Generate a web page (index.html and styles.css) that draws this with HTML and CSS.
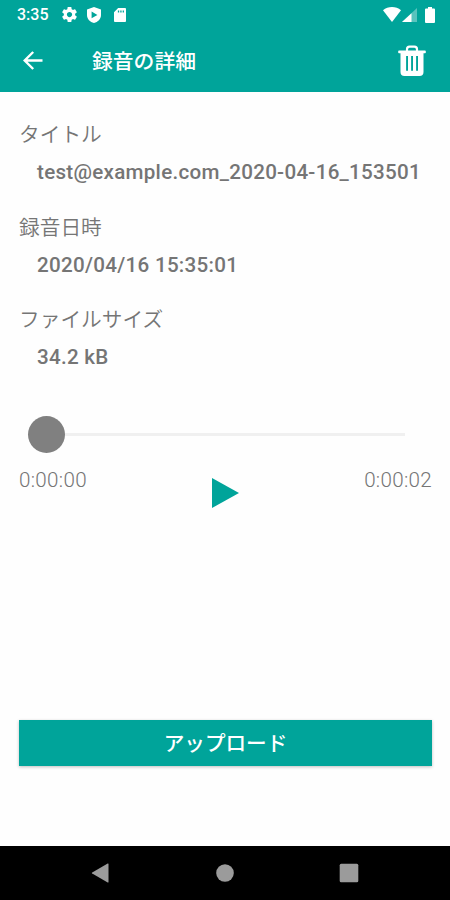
FILE: index.html
```html
<!DOCTYPE html>
<html lang="ja">
<head>
    <meta charset="UTF-8">
    <meta name="viewport" content="width=device-width, initial-scale=1.0">
    <title>録音の詳細</title>
    <link rel="stylesheet" href="styles.css">
</head>
<body>
    <div class="screen">
        <header class="header">
            <div class="status-bar">
                <span class="clock">3:35</span>
                <svg class="status-gear" viewBox="2 2 20 20">
                    <path fill="#fff" fill-rule="evenodd" d="M19.43 12.98c.04-.32.07-.64.07-.98s-.03-.66-.07-.98l2.11-1.65c.19-.15.24-.42.12-.64l-2-3.46c-.12-.22-.39-.3-.61-.22l-2.49 1c-.52-.4-1.08-.73-1.69-.98l-.38-2.65C14.46 2.18 14.25 2 14 2h-4c-.25 0-.46.18-.49.42l-.38 2.65c-.61.25-1.17.59-1.69.98l-2.49-1c-.23-.09-.49 0-.61.22l-2 3.46c-.13.22-.07.49.12.64l2.11 1.65c-.04.32-.07.65-.07.98s.03.66.07.98l-2.11 1.65c-.19.15-.24.42-.12.64l2 3.46c.12.22.39.3.61.22l2.49-1c.52.4 1.08.73 1.69.98l.38 2.65c.03.24.24.42.49.42h4c.25 0 .46-.18.49-.42l.38-2.65c.61-.25 1.17-.59 1.69-.98l2.49 1c.23.09.49 0 .61-.22l2-3.46c.12-.22.07-.49-.12-.64l-2.11-1.65zM12 15.5c-1.93 0-3.5-1.57-3.5-3.5s1.57-3.5 3.5-3.5 3.500 1.570 3.500 3.500-1.570 3.500-3.500 3.500z"/>
                </svg>
                <svg class="status-shield" viewBox="0 0 14 16">
                    <path fill="#fff" fill-rule="evenodd" d="M7 0l7 2.500v5.500c0 4-3 7-7 8-4-1-7-4-7-8V2.500zM4.600 4.600v6.600L10.400 7.900z"/>
                </svg>
                <svg class="status-card" viewBox="0 0 13 15">
                    <path fill="#fff" fill-rule="evenodd" d="M4.500 0H12q1 0 1 1v13q0 1-1 1H1q-1 0-1-1V4.500zM4.200 2.500v2.200h1.400V2.500zM6.800 2.500v2.200h1.400V2.500zM9.400 2.500v2.200h1.400V2.500z"/>
                </svg>
                <svg class="status-wifi" viewBox="0 0 18 15">
                    <path fill="#fff" d="M0 3.200C5 -1 13 -1 18 3.200L9 15z"/>
                </svg>
                <svg class="status-signal" viewBox="0 0 15 14">
                    <path fill="#fff" fill-opacity=".35" d="M15 0v14H0z"/>
                    <path fill="#fff" d="M9.500 5.200V14H0z"/>
                </svg>
                <svg class="status-battery" viewBox="0 0 10 16">
                    <path fill="#fff" d="M3 0h4v1.500h2q1 0 1 1V15q0 1-1 1H1q-1 0-1-1V2.500q0-1 1-1h2z"/>
                </svg>
            </div>
            <div class="title-bar">
                <svg class="back" viewBox="0 0 20 19">
                    <path fill="none" stroke="#fff" stroke-width="2.400" d="M19.500 9.500H2M10.200 1L1.700 9.500l8.500 8.500"/>
                </svg>
                <h1>録音の詳細</h1>
                <svg class="trash" viewBox="0 0 28 32">
                    <path fill="none" stroke="#fff" stroke-width="2.200" d="M9 6.500V4.200q0-2.600 2.600-2.600h4.800q2.600 0 2.600 2.600v2.300"/>
                    <path fill="#fff" fill-rule="evenodd" d="M1 5.500h26q.8 0 .8.800v1.200q0 .8-.8.800h-1.500V27q0 4-4 4h-15q-4 0-4-4V8.300H1q-.8 0-.8-.8V6.300q0-.8.800-.8zM8.100 11v14.800h1.900V11zM13.100 11v14.800h1.900V11zM18.100 11v14.800H20V11z"/>
                </svg>
            </div>
        </header>

        <main class="content">
            <dl class="details">
                <dt>タイトル</dt>
                <dd>test@example.com_2020-04-16_153501</dd>
                <dt>録音日時</dt>
                <dd>2020/04/16 15:35:01</dd>
                <dt>ファイルサイズ</dt>
                <dd>34.2 kB</dd>
            </dl>

            <div class="slider">
                <div class="thumb"></div>
                <div class="track"></div>
            </div>
            <div class="player">
                <span class="time">0:00:00</span>
                <svg class="play" viewBox="0 0 27 30">
                    <path fill="#00a49a" d="M0 0l27 15L0 30z"/>
                </svg>
                <span class="time">0:00:02</span>
            </div>

            <button class="upload">アップロード</button>
        </main>

        <nav class="nav-bar">
            <svg viewBox="0 0 20 20">
                <path fill="#9b9b9b" d="M17.500 1v18q0 .9-.8.500L1.200 10.600q-.9-.6 0-1.200L16.700.500q.8-.4.800.5z"/>
            </svg>
            <svg viewBox="0 0 20 20">
                <circle fill="#9b9b9b" cx="10" cy="10" r="8.800"/>
            </svg>
            <svg viewBox="0 0 20 20">
                <rect fill="#9b9b9b" x=".7" y=".7" width="18.600" height="18.600" rx="1.500"/>
            </svg>
        </nav>
    </div>
</body>
</html>
```
FILE: styles.css
```css
* {
    margin: 0;
    padding: 0;
    box-sizing: border-box;
}
body {
    background-color: #fefefe;
    font-family: Roboto, "Noto Sans CJK JP", sans-serif;
    font-size: 20.6px;
    color: #757575;
}
svg {
    display: block;
    flex: none;
}
.screen {
    display: flex;
    flex-direction: column;
    height: 900px;
}
.header {
    height: 92px;
    background-color: #00a49a;
    color: #fff;
}
.status-bar {
    display: flex;
    align-items: center;
    height: 29px;
    padding: 0 15px 0 17px;
}
.clock {
    width: 45px;
    font-size: 16px;
    font-weight: 500;
    line-height: 31px;
}
.status-gear {
    width: 15px;
    height: 15px;
}
.status-shield {
    width: 14px;
    height: 16px;
    margin-left: 10px;
}
.status-card {
    width: 12px;
    height: 14px;
    margin-left: 13px;
}
.status-wifi {
    width: 18px;
    height: 15px;
    margin-left: auto;
}
.status-signal {
    width: 15px;
    height: 14px;
    margin-left: 1px;
}
.status-battery {
    width: 10px;
    height: 16px;
    margin-left: 8px;
}
.title-bar {
    display: flex;
    align-items: center;
    height: 63px;
    padding: 0 24px 0 23px;
}
.back {
    width: 20px;
    height: 19px;
}
h1 {
    flex: 1;
    padding-top: 2px;
    margin-left: 49px;
    font-size: 20.8px;
    font-weight: 500;
    line-height: 30px;
}
.trash {
    width: 28px;
    height: 32px;
}
.content {
    flex: 1;
    padding: 24px 18px 0 19px;
}
.details dt {
    height: 37px;
    font-size: 20.7px;
    font-weight: 350;
    line-height: 38px;
}
.details dd {
    height: 38px;
    margin-bottom: 17.5px;
    padding-left: 18px;
    font-weight: 500;
    letter-spacing: 0.28px;
    line-height: 38px;
    white-space: nowrap;
}
.slider {
    display: flex;
    align-items: center;
    height: 38px;
    margin-top: 39.5px;
    padding: 0 27px 0 9px;
}
.thumb {
    width: 37px;
    height: 37px;
    border-radius: 50%;
    background-color: #808080;
}
.track {
    flex: 1;
    height: 3px;
    background-color: #f0f0f0;
}
.player {
    display: flex;
    justify-content: space-between;
    height: 54px;
    margin-top: 13px;
}
.time {
    font-weight: 300;
    letter-spacing: 0.3px;
    line-height: 26px;
}
.play {
    width: 27px;
    height: 30px;
    margin-top: 11px;
}
.upload {
    display: block;
    width: 100%;
    height: 46px;
    margin-top: 199px;
    border: none;
    background-color: #00a49a;
    box-shadow: 0 1px 3px rgba(0, 0, 0, 0.25);
    color: #fff;
    font-family: inherit;
    font-size: 20.6px;
    font-weight: 500;
    line-height: 48px;
}
.nav-bar {
    display: flex;
    justify-content: center;
    align-items: center;
    gap: 104px;
    height: 54px;
    background-color: #000;
}
.nav-bar svg {
    width: 20px;
    height: 20px;
}
```
